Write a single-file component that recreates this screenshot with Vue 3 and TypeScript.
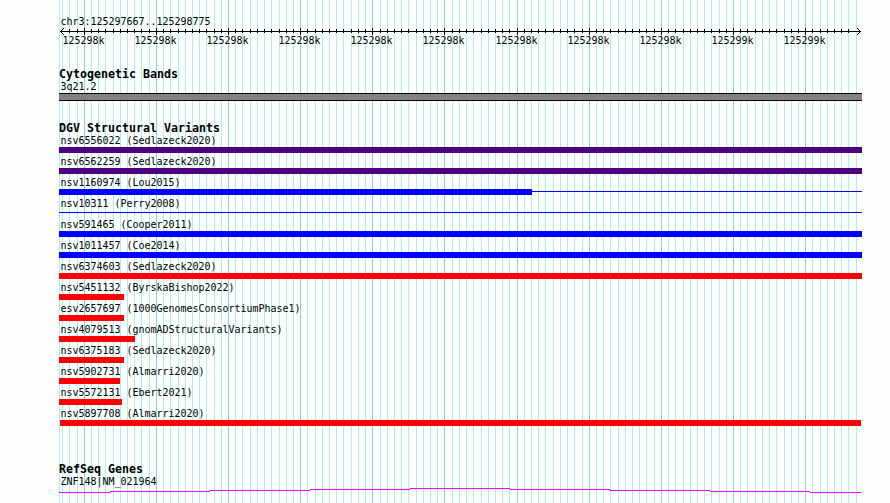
<script setup lang="ts">
interface Variant {
  name: string
  start: number
  end: number
  kind: 'complex' | 'gain' | 'loss' | 'outline'
  tail?: boolean
}

const FIRST_MAJOR = 84.215
const STEP = 7.2147

const lines = Array.from({ length: 111 }, (_, i) => {
  const k = i - 3
  return { x: Math.floor(FIRST_MAJOR + k * STEP), major: k % 10 === 0, k }
})
const labels = lines
  .filter((l) => l.major)
  .map((l) => ({ x: l.x - 21.5, text: l.k < 90 ? '125298k' : '125299k' }))

const variants: Variant[] = [
  { name: 'nsv6556022 (Sedlazeck2020)', start: 0, end: 803, kind: 'complex' },
  { name: 'nsv6562259 (Sedlazeck2020)', start: 0, end: 803, kind: 'complex' },
  { name: 'nsv1160974 (Lou2015)', start: 0, end: 473, kind: 'gain', tail: true },
  { name: 'nsv10311 (Perry2008)', start: 0, end: 0, kind: 'outline', tail: true },
  { name: 'nsv591465 (Cooper2011)', start: 0, end: 803, kind: 'gain' },
  { name: 'nsv1011457 (Coe2014)', start: 0, end: 803, kind: 'gain' },
  { name: 'nsv6374603 (Sedlazeck2020)', start: 0, end: 803, kind: 'loss' },
  { name: 'nsv5451132 (ByrskaBishop2022)', start: 0, end: 65, kind: 'loss' },
  { name: 'esv2657697 (1000GenomesConsortiumPhase1)', start: 0, end: 65, kind: 'loss' },
  { name: 'nsv4079513 (gnomADStructuralVariants)', start: 0, end: 76, kind: 'loss' },
  { name: 'nsv6375183 (Sedlazeck2020)', start: 0, end: 65, kind: 'loss' },
  { name: 'nsv5902731 (Almarri2020)', start: 0, end: 61, kind: 'loss' },
  { name: 'nsv5572131 (Ebert2021)', start: 0, end: 63, kind: 'loss' },
  { name: 'nsv5897708 (Almarri2020)', start: 1, end: 802, kind: 'loss' },
]
</script>

<template>
  <main class="browser">
    <svg class="grid" width="890" height="503" shape-rendering="crispEdges">
      <rect class="minor" x="59" y="0" width="1" height="503" />
      <rect
        v-for="l in lines"
        :key="l.k"
        :class="l.major ? 'major' : 'minor'"
        :x="l.x"
        y="0"
        width="1"
        height="503"
      />
    </svg>

    <header class="ruler">
      <div class="text">chr3:125297667..125298775</div>
      <svg class="scale" width="890" height="24" viewBox="0 26 890 24">
        <g shape-rendering="crispEdges">
          <rect x="60" y="31" width="801" height="1" />
          <rect
            v-for="l in lines.slice(1, 110)"
            :key="l.k"
            :x="l.x"
            :y="l.major ? 28 : 29"
            width="1"
            :height="l.major ? 7 : 4"
          />
          <path d="M61 30h1v3h-1zM62 29h1v1h-1zM63 28h1v1h-1zM62 33h1v1h-1zM63 34h1v1h-1z" />
          <path d="M859 30h1v3h-1zM858 29h1v1h-1zM857 28h1v1h-1zM858 33h1v1h-1zM857 34h1v1h-1z" />
        </g>
        <text v-for="l in labels" :key="l.x" :x="l.x" y="44">{{ l.text }}</text>
      </svg>
    </header>

    <section class="track cyto">
      <h2>Cytogenetic Bands</h2>
      <div class="text">3q21.2</div>
      <div class="band"></div>
    </section>

    <section class="track variants">
      <h2>DGV Structural Variants</h2>
      <div v-for="v in variants" :key="v.name" class="variant">
        <div class="text">{{ v.name }}</div>
        <div class="lane">
          <i
            :class="['bar', v.kind]"
            :style="{ marginLeft: v.start + 'px', width: v.end - v.start + 'px' }"
          ></i>
          <i v-if="v.tail" class="tail"></i>
        </div>
      </div>
    </section>

    <section class="track genes">
      <h2>RefSeq Genes</h2>
      <div class="text">ZNF148|NM_021964</div>
      <svg class="intron" width="803" height="15" viewBox="59 488 803 15" shape-rendering="crispEdges">
        <path
          d="M59 492.5h51M110 491.5h100M210 490.5h100M310 489.5h100M410 488.5h100M510 489.5h100M610 490.5h100M710 491.5h100M810 492.5h51"
        />
      </svg>
    </section>
  </main>
</template>

<style>
body {
  background: #fcfffc;
}
</style>

<style scoped>
.browser {
  position: relative;
  width: 890px;
  height: 503px;
  overflow: hidden;
  box-sizing: border-box;
  padding-top: 16px;
  background: #fcfffc;
  color: #000;
  font: 10px/12px "DejaVu Sans Mono", "Liberation Mono", monospace;
  letter-spacing: -0.02px;
}
.grid {
  position: absolute;
  left: 0;
  top: 0;
}
.minor {
  fill: #afeeee;
}
.major {
  fill: #87ceeb;
}
.ruler,
.track {
  position: relative;
}
.ruler {
  height: 51px;
}
.ruler .text {
  height: 10px;
  padding-left: 60.5px;
}
.scale {
  display: block;
}
.track {
  width: 803px;
  margin-left: 59px;
}
h2 {
  margin: 0;
  height: 14px;
  font-size: 11.63px;
  line-height: 14px;
  font-weight: bold;
  letter-spacing: 0;
  white-space: pre;
}
.text {
  height: 12px;
  padding-left: 1.5px;
  white-space: pre;
}
.cyto {
  height: 54px;
}
.band {
  box-sizing: border-box;
  height: 8px;
  border: solid #000;
  border-width: 1px 0;
  background: #848084;
}
.variants {
  height: 341px;
}
.variant {
  height: 21px;
}
.lane {
  display: flex;
  height: 6px;
}
.bar {
  height: 6px;
}
.complex {
  background: #4b0082;
}
.gain {
  background: #00f;
}
.loss {
  background: #f00;
}
.tail {
  flex: 1;
  height: 1px;
  margin-top: 2px;
  background: #00f;
}
.intron {
  display: block;
}
.intron path {
  stroke: #f0f;
  stroke-width: 1;
  fill: none;
}
</style>
